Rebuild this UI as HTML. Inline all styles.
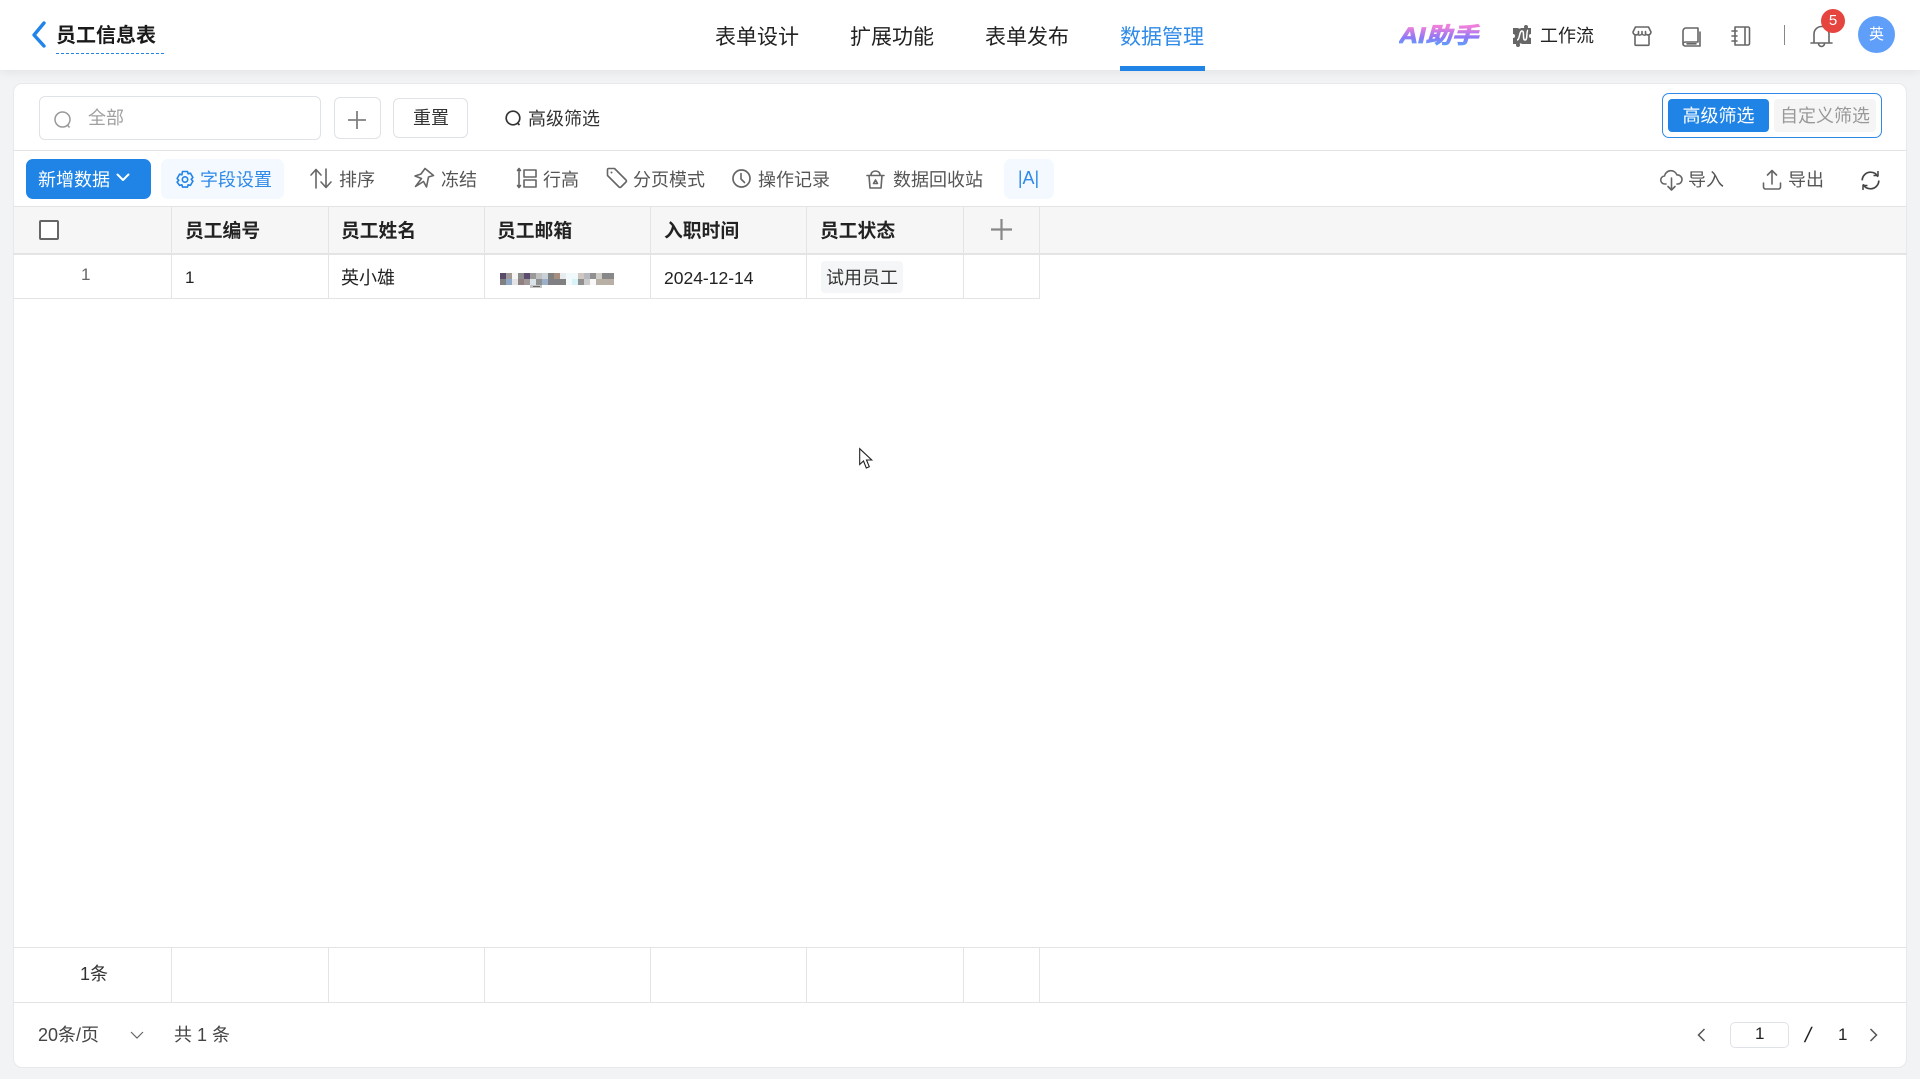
<!DOCTYPE html>
<html lang="zh"><head><meta charset="utf-8"><title>员工信息表</title>
<style>
*{box-sizing:border-box}
html,body{margin:0;padding:0}
body{width:1920px;height:1079px;overflow:hidden;background:#f2f3f5;position:relative;font-family:"Liberation Sans","Noto Sans CJK SC",sans-serif;color:#333}
.a{position:absolute}
.t{position:absolute;white-space:nowrap;height:30px;line-height:30px;font-size:18px}
svg{position:absolute;overflow:visible}
.g{fill:none;stroke:#666;stroke-width:1.6;stroke-linecap:round;stroke-linejoin:round}
.hl{position:absolute;left:13px;width:1894px;height:1px;background:#e4e4e4}
.vl{position:absolute;width:1px;background:#e4e4e4}
.th{font-weight:700;color:#222;font-size:18.8px}
.nav{font-size:21px;color:#222;height:34px;line-height:34px}
</style></head><body>

<!-- header -->
<div class="a" style="left:0;top:0;width:1920px;height:70px;background:#fff;box-shadow:0 2px 10px rgba(0,0,0,.07)"></div>
<svg style="left:29px;top:20px" width="18" height="30"><path d="M15 3 L5 15 L15 26" fill="none" stroke="#2084e8" stroke-width="3.4" stroke-linecap="round" stroke-linejoin="round"/></svg>
<div class="t" style="left:56px;top:21px;font-size:20px;font-weight:700;color:#1a1a1a">员工信息表</div>
<div class="a" style="left:56px;top:53px;width:108px;border-top:1px dashed #2084e8"></div>

<div class="t nav" style="left:715px;top:21px">表单设计</div>
<div class="t nav" style="left:850px;top:21px">扩展功能</div>
<div class="t nav" style="left:985px;top:21px">表单发布</div>
<div class="t nav" style="left:1120px;top:21px;color:#2f8ae8">数据管理</div>
<div class="a" style="left:1120px;top:66px;width:85px;height:5px;background:#1f84e6"></div>

<div class="t" style="left:1399px;top:21px;font-size:22px;font-weight:700;font-style:italic;width:68px;background:linear-gradient(180deg,#ee80dc 20%,#8f78f6 55%,#55a6fa 85%);-webkit-background-clip:text;background-clip:text;color:transparent;-webkit-text-stroke:.8px transparent;transform:scaleX(1.2);transform-origin:left center">AI助手</div>

<svg style="left:1512px;top:25px" width="20" height="22" viewBox="0 0 20 22"><path d="M1 3h5a2 2 0 0 0 3 0h10v6a2 2 0 0 0 0 4v6H10a2 2 0 0 0-3 0H1v-6a2 2 0 0 0 0-4z" fill="#666"/><path d="M5 15c3 0 2-9 5-9s0 9 3 9 1-9 3-10" fill="none" stroke="#fff" stroke-width="1.5"/><circle cx="14" cy="2" r="2" fill="#666"/><circle cx="6" cy="20" r="2" fill="#666"/></svg>
<div class="t" style="left:1540px;top:21px;color:#222">工作流</div>

<svg style="left:1632px;top:26px" width="20" height="20" viewBox="0 0 20 20"><path class="g" d="M3 9v9.500a.8.800 0 0 0 .8.800h12.400a.8.800 0 0 0 .8-.8V9M3.500 1h13l2.500 5a3 3 0 0 1-4.500 2.500A3.500 3.500 0 0 1 10 8a3.500 3.500 0 0 1-4.500.5A3 3 0 0 1 1 6zM6.500 5.500v2M10 5.500v2M13.500 5.500v2"/></svg>
<svg style="left:1682px;top:27px" width="19" height="20" viewBox="0 0 19 20"><path class="g" d="M4 1h12v14H3.500A2.500 2.500 0 0 0 1 17.500V4a3 3 0 0 1 3-3zM1 17a2.300 2.300 0 0 0 2.500 2H18V5M5 16.800h9"/></svg>
<svg style="left:1731px;top:26px" width="20" height="20" viewBox="0 0 20 20"><path class="g" d="M4 1h13a1.500 1.500 0 0 1 1.500 1.500v15A1.500 1.500 0 0 1 17 19H4zM14 1v18M1 5h5M1 10h5M1 15h5"/></svg>
<div class="a" style="left:1784px;top:25px;width:1px;height:20px;background:#888"></div>
<svg style="left:1810px;top:23px" width="23" height="24" viewBox="0 0 23 24"><path class="g" d="M1 20h21M4 20V11a7.500 7.500 0 0 1 15 0v9M8.500 20.500a3 3 0 0 0 6 0"/></svg>
<div class="a" style="left:1821px;top:9px;width:24px;height:24px;border-radius:50%;background:#e5443f;color:#fff;font-size:15px;line-height:24px;text-align:center">5</div>
<div class="a" style="left:1858px;top:16px;width:37px;height:37px;border-radius:50%;background:#5f9ffa;color:#fff;font-size:15px;line-height:37px;text-align:center">英</div>

<!-- card -->
<div class="a" style="left:13px;top:83px;width:1894px;height:985px;background:#fff;border:1px solid #e8e9eb;border-radius:9px"></div>

<!-- filter row -->
<div class="a" style="left:39px;top:96px;width:282px;height:44px;border:1px solid #dfe2e6;border-radius:6px"></div>
<svg style="left:54px;top:111px" width="18" height="19" viewBox="0 0 18 19"><circle cx="8.500" cy="8.500" r="7.500" fill="none" stroke="#999" stroke-width="1.500"/><path d="M13.500 14l2 2.500" stroke="#999" stroke-width="1.500" fill="none"/></svg>
<div class="t" style="left:88px;top:103px;color:#a0a0a0">全部</div>
<div class="a" style="left:334px;top:97px;width:47px;height:42px;border:1px solid #dfe2e6;border-radius:6px"></div>
<svg style="left:348px;top:111px" width="18" height="18"><path d="M9 0v18M0 9h18" stroke="#808080" stroke-width="1.800" fill="none"/></svg>
<div class="a" style="left:393px;top:98px;width:75px;height:40px;border:1px solid #dfe2e6;border-radius:6px"></div>
<div class="t" style="left:413px;top:103px">重置</div>
<svg style="left:505px;top:110px" width="17" height="17" viewBox="0 0 17 17"><circle cx="8" cy="8" r="6.800" fill="none" stroke="#333" stroke-width="1.700"/><path d="M12.500 13l2 2" stroke="#333" stroke-width="1.700" fill="none"/></svg>
<div class="t" style="left:528px;top:104px">高级筛选</div>

<div class="a" style="left:1662px;top:93px;width:220px;height:45px;border:1.500px solid #2e8ae6;border-radius:7px"></div>
<div class="a" style="left:1668px;top:99px;width:101px;height:33px;background:#1f84e6;border-radius:4px;color:#fff;font-size:18px;line-height:35px;text-align:center">高级筛选</div>
<div class="a" style="left:1774px;top:99px;width:102px;height:33px;background:#f5f5f5;border-radius:4px;color:#999;font-size:18px;line-height:35px;text-align:center">自定义筛选</div>

<div class="hl" style="top:150px"></div>

<!-- toolbar -->
<div class="a" style="left:26px;top:159px;width:125px;height:40px;background:#1f84e6;border-radius:7px"></div>
<div class="t" style="left:38px;top:165px;color:#fff">新增数据</div>
<svg style="left:116px;top:173px" width="14" height="10"><path d="M1.500 1.500L7 7l5.500-5.500" fill="none" stroke="#fff" stroke-width="2" stroke-linecap="round" stroke-linejoin="round"/></svg>

<div class="a" style="left:161px;top:159px;width:123px;height:40px;background:#f4f9ff;border-radius:7px"></div>
<svg style="left:176px;top:170px" width="18" height="19" viewBox="0 0 18 19"><path d="M6.500 1.500h5l.6 2.300 2.300-.6 2.500 4.300-1.700 1.800 1.700 1.800-2.500 4.300-2.300-.6-.6 2.300h-5l-.6-2.300-2.300.6L1.100 12.100l1.700-1.800-1.700-1.800 2.500-4.300 2.300.6z" fill="none" stroke="#2084e8" stroke-width="1.600" stroke-linejoin="round"/><circle cx="9" cy="9.500" r="2.700" fill="none" stroke="#2084e8" stroke-width="1.600"/></svg>
<div class="t" style="left:200px;top:165px;color:#2f8ae8">字段设置</div>

<svg style="left:310px;top:168px" width="22" height="21" viewBox="0 0 22 21"><path class="g" d="M6 20V2M1 7l5-5.500L11 7M16 1v18M11 14l5 5.500 5-5.500"/></svg>
<div class="t" style="left:339px;top:165px;color:#555">排序</div>

<svg style="left:413px;top:167px" width="22" height="22" viewBox="0 0 22 22"><path class="g" d="M12 1.500l8.500 7-5 1.500-2 10-3-5.500-8 5 6-8L2 9l6-2z"/></svg>
<div class="t" style="left:441px;top:165px;color:#555">冻结</div>

<svg style="left:517px;top:167px" width="20" height="22" viewBox="0 0 20 22"><path class="g" d="M2 3v16M.5 3.500L2 1.500l1.500 2M.5 18.500L2 20.500l1.500-2M7 3h12v7H7zM7 13h12v7H7z"/></svg>
<div class="t" style="left:543px;top:165px;color:#555">行高</div>

<svg style="left:606px;top:167px" width="22" height="22" viewBox="0 0 22 22"><path class="g" d="M1.500 2.500a1 1 0 0 1 1-1h6l11.500 11.500a1.500 1.500 0 0 1 0 2L15 20a1.500 1.500 0 0 1-2 0L1.500 8.500z"/><circle cx="5.500" cy="5.500" r="1" fill="#666"/></svg>
<div class="t" style="left:633px;top:165px;color:#555">分页模式</div>

<svg style="left:732px;top:169px" width="19" height="20" viewBox="0 0 19 20"><circle cx="9.500" cy="9.500" r="8.500" fill="none" stroke="#666" stroke-width="1.700"/><path class="g" d="M9 4.500V10l3.500 3.500"/></svg>
<div class="t" style="left:758px;top:165px;color:#555">操作记录</div>

<svg style="left:866px;top:170px" width="19" height="19" viewBox="0 0 19 19"><path class="g" d="M1 5.500h17M5 5c0-2.500 2-4 4.500-4s4.500 1.500 4.500 4M3 5.500l1 12.500h11l1-12.500M7.500 13.500l2-3.500 2 3.500z"/></svg>
<div class="t" style="left:893px;top:165px;color:#555">数据回收站</div>

<div class="a" style="left:1004px;top:159px;width:50px;height:40px;background:#f4f9ff;border-radius:7px;color:#2f8ae8;font-size:18px;line-height:39px;text-align:center;padding-right:1px">|A|</div>

<svg style="left:1660px;top:169px" width="23" height="22" viewBox="0 0 23 22"><path class="g" d="M6 15H5a4 4 0 0 1-.5-8A6.500 6.500 0 0 1 17 6a4.500 4.500 0 0 1 1 9h-1M11.500 9v12M8 17.500l3.500 3.500 3.500-3.500"/></svg>
<div class="t" style="left:1688px;top:165px;color:#555">导入</div>
<svg style="left:1762px;top:169px" width="20" height="21" viewBox="0 0 20 21"><path class="g" d="M10 15V1.500M5.500 6L10 1.500 14.500 6M1.500 14v4a2 2 0 0 0 2 2h13a2 2 0 0 0 2-2v-4"/></svg>
<div class="t" style="left:1788px;top:165px;color:#555">导出</div>
<svg style="left:1860px;top:170px" width="21" height="21" viewBox="0 0 21 21"><circle cx="10.500" cy="10.500" r="8.300" fill="none" stroke="#444" stroke-width="1.700" stroke-dasharray="22 4"/><path d="M18 1v4.500h-4.500M3 20v-4.500h4.500" fill="none" stroke="#444" stroke-width="1.500"/></svg>

<!-- table -->
<div class="a" style="left:14px;top:206px;width:1892px;height:48px;background:#f6f6f6"></div>
<div class="hl" style="top:206px"></div>
<div class="hl" style="top:253px;height:2px"></div>
<div class="a" style="left:13px;top:298px;width:1027px;height:1px;background:#e4e4e4"></div>
<div class="vl" style="left:171px;top:206px;height:93px"></div>
<div class="vl" style="left:328px;top:206px;height:93px"></div>
<div class="vl" style="left:484px;top:206px;height:93px"></div>
<div class="vl" style="left:650px;top:206px;height:93px"></div>
<div class="vl" style="left:806px;top:206px;height:93px"></div>
<div class="vl" style="left:963px;top:206px;height:93px"></div>
<div class="vl" style="left:1039px;top:206px;height:93px"></div>

<div class="a" style="left:39px;top:220px;width:20px;height:20px;border:2px solid #666;border-radius:2px;background:#fff"></div>
<div class="t th" style="left:185px;top:216px">员工编号</div>
<div class="t th" style="left:341px;top:216px">员工姓名</div>
<div class="t th" style="left:497px;top:216px">员工邮箱</div>
<div class="t th" style="left:664px;top:216px">入职时间</div>
<div class="t th" style="left:820px;top:216px">员工状态</div>
<svg style="left:991px;top:219px" width="21" height="21"><path d="M10.500 0v21M0 10.500h21" stroke="#888" stroke-width="2.200" fill="none"/></svg>

<div class="t" style="left:81px;top:260px;font-size:17px;color:#666">1</div>
<div class="t" style="left:185px;top:263px;font-size:17px;color:#222">1</div>
<div class="t" style="left:341px;top:263px;color:#222">英小雄</div>
<svg style="left:500px;top:273px" width="114" height="16" shape-rendering="crispEdges">
<g>
<rect x="0" width="6" height="6" fill="#5a4a6a"/><rect x="6" width="6" height="6" fill="#a09a98"/><rect x="12" width="6" height="6" fill="#f5f5f5"/><rect x="18" width="6" height="6" fill="#8c8c8c"/><rect x="24" width="6" height="6" fill="#5c4c70"/><rect x="30" width="6" height="6" fill="#999"/><rect x="36" width="6" height="6" fill="#c0c0c0"/><rect x="42" width="6" height="6" fill="#c8d0d8"/><rect x="48" width="6" height="6" fill="#808080"/><rect x="54" width="6" height="6" fill="#a89080"/><rect x="60" width="6" height="6" fill="#e8ecee"/><rect x="66" width="12" height="6" fill="#f0fafc"/><rect x="78" width="6" height="6" fill="#d0c8c0"/><rect x="84" width="6" height="6" fill="#b8b8c0"/><rect x="90" width="6" height="6" fill="#909090"/><rect x="96" width="6" height="6" fill="#d0ccc8"/><rect x="102" width="12" height="6" fill="#888"/>
<rect x="0" y="6" width="6" height="6" fill="#808080"/><rect x="6" y="6" width="6" height="6" fill="#90a8c8"/><rect x="12" y="6" width="6" height="6" fill="#e4e4e4"/><rect x="18" y="6" width="6" height="6" fill="#908080"/><rect x="24" y="6" width="6" height="6" fill="#a09898"/><rect x="30" y="6" width="6" height="6" fill="#d8e4e8"/><rect x="36" y="6" width="6" height="6" fill="#909090"/><rect x="42" y="6" width="6" height="6" fill="#9ab0c8"/><rect x="48" y="6" width="12" height="6" fill="#808084"/><rect x="60" y="6" width="6" height="6" fill="#808080"/><rect x="66" y="6" width="6" height="6" fill="#f4fafc"/><rect x="72" y="6" width="6" height="6" fill="#d8f4f8"/><rect x="78" y="6" width="6" height="6" fill="#909090"/><rect x="84" y="6" width="6" height="6" fill="#ccc"/><rect x="90" y="6" width="6" height="6" fill="#f8f8f8"/><rect x="96" y="6" width="18" height="6" fill="#b8b0a4"/>
<rect x="30" y="12" width="12" height="3" fill="#c4c4c4"/><rect x="33" y="13" width="7" height="1" fill="#666"/>
</g></svg>
<div class="t" style="left:664px;top:263px;font-size:17.5px;color:#222">2024-12-14</div>
<div class="a" style="left:821px;top:261px;width:82px;height:32px;background:#f5f6f7;border-radius:4px;color:#333;font-size:18px;line-height:34px;text-align:center">试用员工</div>

<svg style="left:859px;top:448px" width="14" height="23" viewBox="0 0 14 23"><path d="M.7.700V16.500L4.500 13l2.800 7 3-1.300-2.800-6.700h5.200z" fill="#fff" stroke="#222" stroke-width="1.100" stroke-linejoin="miter"/></svg>

<!-- summary -->
<div class="hl" style="top:947px"></div>
<div class="hl" style="top:1002px"></div>
<div class="vl" style="left:171px;top:947px;height:55px"></div>
<div class="vl" style="left:328px;top:947px;height:55px"></div>
<div class="vl" style="left:484px;top:947px;height:55px"></div>
<div class="vl" style="left:650px;top:947px;height:55px"></div>
<div class="vl" style="left:806px;top:947px;height:55px"></div>
<div class="vl" style="left:963px;top:947px;height:55px"></div>
<div class="vl" style="left:1039px;top:947px;height:55px"></div>
<div class="t" style="left:80px;top:959px;color:#333">1条</div>

<!-- pagination -->
<div class="t" style="left:38px;top:1020px;color:#444">20条/页</div>
<svg style="left:130px;top:1031px" width="14" height="9"><path d="M1 1l6 6 6-6" fill="none" stroke="#666" stroke-width="1.200"/></svg>
<div class="t" style="left:174px;top:1020px;color:#444">共 1 条</div>
<svg style="left:1697px;top:1028px" width="9" height="14"><path d="M7.500 1L1.500 7l6 6" fill="none" stroke="#555" stroke-width="1.500"/></svg>
<div class="a" style="left:1730px;top:1022px;width:59px;height:26px;border:1px solid #dfe2e6;border-radius:5px"></div>
<div class="t" style="left:1755px;top:1019px;font-size:17px;color:#222">1</div>
<div class="t" style="left:1805px;top:1021px;font-size:21px;color:#222;transform:skewX(-12deg)">/</div>
<div class="t" style="left:1838px;top:1020px;font-size:17px;color:#222">1</div>
<svg style="left:1869px;top:1028px" width="9" height="14"><path d="M1.500 1l6 6-6 6" fill="none" stroke="#555" stroke-width="1.500"/></svg>

</body></html>
